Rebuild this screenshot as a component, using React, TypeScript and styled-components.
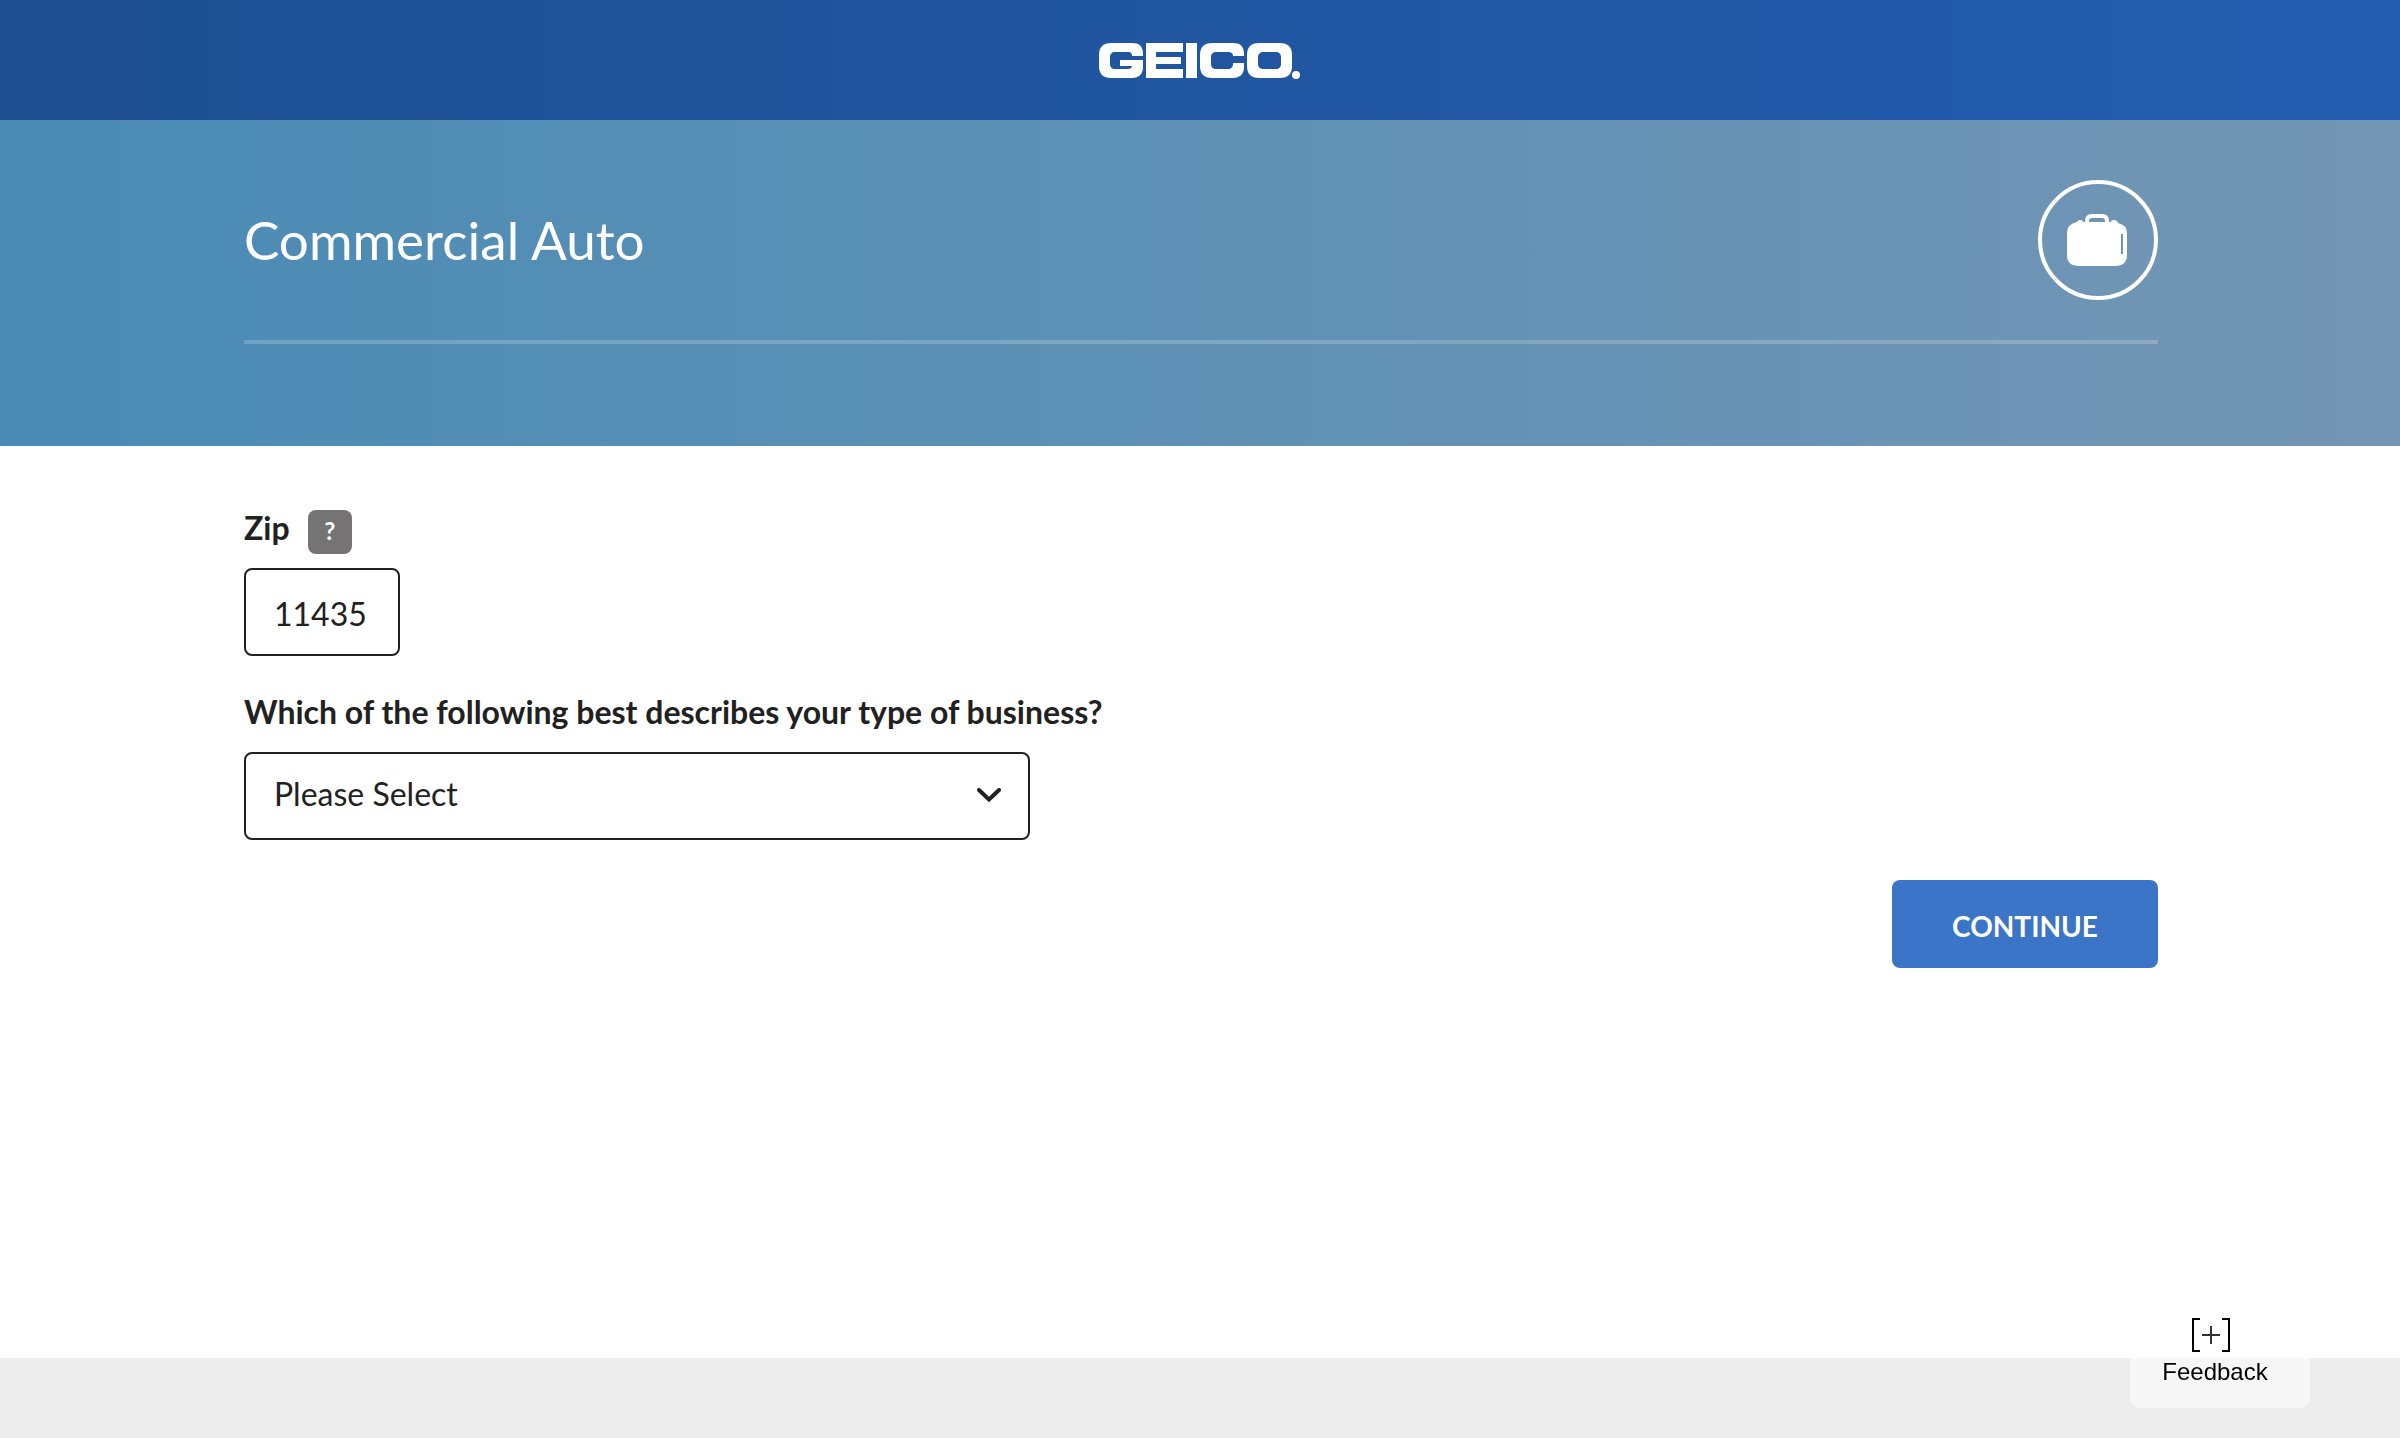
import React from "react";
import styled, { createGlobalStyle } from "styled-components";

const GlobalStyle = createGlobalStyle`
  *, *::before, *::after { box-sizing: border-box; }
  body {
    margin: 0;
    background: #ffffff;
    color: #212121;
    font-family: Lato, "Open Sans", sans-serif;
    font-size: 32px;
    line-height: 36px;
  }
`;

const Page = styled.div`
  display: flex;
  flex-direction: column;
  min-height: 100vh;
`;

const TopBar = styled.header`
  display: flex;
  align-items: center;
  justify-content: center;
  height: 120px;
  background: linear-gradient(90deg, #1d4f91, #245db0);
`;

const LogoLink = styled.a`
  display: flex;
  color: #ffffff;
`;

const Container = styled.div`
  width: 100%;
  max-width: 1916px;
  margin: 0 auto;
  padding-left: 2px;
`;

const Hero = styled.section`
  height: 326px;
  padding-top: 60px;
  color: #ffffff;
  background: linear-gradient(90deg, #498bb5, #7496b5);
`;

const HeroRow = styled.div`
  display: flex;
  align-items: center;
  justify-content: space-between;
  padding-bottom: 40px;
  border-bottom: 4px solid rgba(255, 255, 255, 0.2);
`;

const Title = styled.h1`
  margin: 0;
  font-size: 53px;
  font-weight: 400;
  line-height: 64px;
`;

const IconRing = styled.div`
  display: flex;
  align-items: center;
  justify-content: center;
  width: 120px;
  height: 120px;
  padding-right: 2px;
  border: 4px solid #ffffff;
  border-radius: 50%;
`;

const Main = styled.main`
  flex: 1;
  padding: 64px 0;
`;

const Form = styled.form`
  display: flex;
  flex-direction: column;
  gap: 38px;
`;

const Field = styled.div`
  display: flex;
  flex-direction: column;
  align-items: flex-start;
  gap: 22px;
`;

const ZipField = styled(Field)`
  gap: 14px;
`;

const LabelRow = styled.div`
  display: flex;
  align-items: flex-start;
  gap: 18px;
`;

const Label = styled.label`
  font-weight: 700;
`;

const HelpButton = styled.button`
  width: 44px;
  height: 44px;
  padding: 0 0 2px;
  border: 0;
  border-radius: 8px;
  background: #757373;
  color: #ffffff;
  font: 700 24px/40px Lato, sans-serif;
`;

const ZipInput = styled.input`
  width: 156px;
  height: 88px;
  padding: 2px 28px 0;
  border: 2px solid #212121;
  border-radius: 8px;
  background: #ffffff;
  color: #212121;
  font: 400 32px/40px Lato, sans-serif;
`;

const SelectWrap = styled.div`
  display: grid;
  align-items: center;
  width: 100%;
  max-width: 786px;

  > * { grid-area: 1 / 1; }
  > svg { justify-self: end; margin-right: 29px; pointer-events: none; }
`;

const Select = styled.select`
  width: 100%;
  height: 88px;
  padding: 0 28px 4px;
  border: 2px solid #212121;
  border-radius: 8px;
  appearance: none;
  background: #ffffff;
  color: #212121;
  font: 400 32px/40px Lato, sans-serif;
`;

const Actions = styled.div`
  display: flex;
  justify-content: flex-end;
  padding-top: 2px;
`;

const ContinueButton = styled.button`
  width: 266px;
  height: 88px;
  padding: 4px 0 0;
  border: 0;
  border-radius: 8px;
  background: #3b75c8;
  color: #ffffff;
  font: 700 28px/40px Lato, sans-serif;
`;

const Footer = styled.footer`
  height: 80px;
  background: #ececec;
`;

const FeedbackButton = styled.button`
  position: fixed;
  right: 90px;
  bottom: 30px;
  display: flex;
  flex-direction: column;
  align-items: center;
  justify-content: flex-start;
  gap: 6px;
  width: 180px;
  height: 100px;
  padding: 10px 10px 0 0;
  border: 0;
  border-radius: 10px;
  background: rgba(255, 255, 255, 0.5);
  color: #000000;
  font: 400 24px/28px "Liberation Sans", Arial, sans-serif;

  > svg { margin-right: 8px; }
`;

function Logo() {
  return (
    <svg width="202" height="38" viewBox="0 -2 202 38" fill="currentColor" fillRule="evenodd" aria-hidden="true">
      <path d="M44 13V11C44 3 40 0 33 0H12C4 0 0 4 0 12V23C0 31 4 35 12 35H33C40 35 44 31 44 24V17H21V23H33C33 25 31 26 29 26H16C13 26 11 24 11 21V14C11 11 13 9 16 9H29C32 9 33 10 33 13Z" />
      <path d="M47 0H84V9H57V14H82V21H57V26H84V35H47Z" />
      <path d="M87 0H98V35H87Z" />
      <path d="M145 13V11C145 3 141 0 134 0H113C105 0 101 4 101 12V23C101 31 105 35 113 35H134C141 35 145 31 145 24V20H134V21C134 24 132 26 129 26H117C114 26 112 24 112 21V14C112 11 114 9 117 9H129C132 9 134 10 134 13Z" />
      <path d="M160 0H181C189 0 193 4 193 12V23C193 31 189 35 181 35H160C152 35 148 31 148 23V12C148 4 152 0 160 0ZM165 9C161 9 159 11 159 14V21C159 24 161 26 165 26H177C180 26 182 24 182 21V14C182 11 180 9 177 9Z" />
      <circle cx="197" cy="32" r="4" />
    </svg>
  );
}

function Briefcase() {
  return (
    <svg width="60" height="52" viewBox="0 0 60 52" aria-hidden="true">
      <path d="M20 9V7Q20 2 25 2H35Q40 2 40 7V9" fill="none" stroke="#ffffff" strokeWidth="4" />
      <path fill="#ffffff" fillRule="evenodd" d="M10 8Q11 6 13 6Q16 6 16 8H44Q44 6 47 6Q50 6 51 9Q60 11 60 19V41Q60 52 48 52H12Q0 52 0 41V19Q0 10 10 8ZM54 20V40H56V20Z" />
    </svg>
  );
}

function Chevron() {
  return (
    <svg width="24" height="16" viewBox="0 0 24 16" fill="none" stroke="#212121" strokeWidth="4" strokeLinecap="round" aria-hidden="true">
      <path d="M2 2L12 11.500L22 2" />
    </svg>
  );
}

function FeedbackIcon() {
  return (
    <svg width="38" height="34" viewBox="0 0 38 34" fill="none" stroke="#000000" strokeWidth="2" aria-hidden="true">
      <path d="M8 1H1V33H8M30 1H37V33H30" />
      <path d="M10 17H28M19 8V26" stroke="#333333" />
    </svg>
  );
}

export default function App() {
  return (
    <Page>
      <GlobalStyle />
      <TopBar>
        <LogoLink href="#" aria-label="GEICO">
          <Logo />
        </LogoLink>
      </TopBar>
      <Hero>
        <Container>
          <HeroRow>
            <Title>Commercial Auto</Title>
            <IconRing>
              <Briefcase />
            </IconRing>
          </HeroRow>
        </Container>
      </Hero>
      <Main>
        <Container>
          <Form onSubmit={(event) => event.preventDefault()}>
            <ZipField>
              <LabelRow>
                <Label htmlFor="zip">Zip</Label>
                <HelpButton type="button" aria-label="Zip help">?</HelpButton>
              </LabelRow>
              <ZipInput id="zip" inputMode="numeric" maxLength={5} defaultValue="11435" />
            </ZipField>
            <Field>
              <Label htmlFor="business">Which of the following best describes your type of business?</Label>
              <SelectWrap>
                <Select id="business" defaultValue="">
                  <option value="">Please Select</option>
                </Select>
                <Chevron />
              </SelectWrap>
            </Field>
            <Actions>
              <ContinueButton type="submit">CONTINUE</ContinueButton>
            </Actions>
          </Form>
        </Container>
      </Main>
      <Footer />
      <FeedbackButton type="button">
        <FeedbackIcon />
        Feedback
      </FeedbackButton>
    </Page>
  );
}
